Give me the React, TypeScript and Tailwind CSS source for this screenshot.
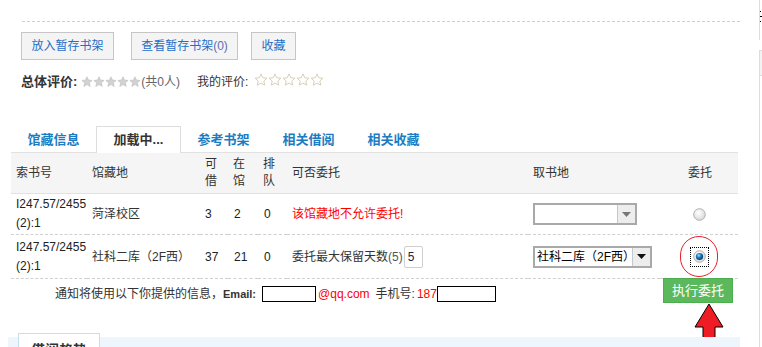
import React from "react";

const font = { fontFamily: '"Liberation Sans", "Noto Sans CJK SC", sans-serif' };

function Star({ filled }: { filled: boolean }) {
  return (
    <svg width={filled ? 12 : 14} height={filled ? 12 : 14} viewBox="0 0 24 24">
      <path
        d="M12 1.5l3 6.6 7.2.8-5.4 4.8 1.6 7.1L12 17.2l-6.4 3.6 1.6-7.1-5.4-4.8 7.2-.8z"
        fill={filled ? "#d2d2d2" : "#fff"}
        stroke={filled ? "#bdbdbd" : "#d4ccb0"}
        strokeWidth={filled ? 1.2 : 1.6}
        strokeLinejoin="round"
      />
    </svg>
  );
}

function Radio({ checked }: { checked?: boolean }) {
  return (
    <svg width="13" height="13" viewBox="0 0 13 13">
      <defs>
        <radialGradient id="rg1" cx="40%" cy="35%" r="70%">
          <stop offset="0" stopColor="#ffffff" />
          <stop offset="1" stopColor="#d6d6d6" />
        </radialGradient>
        <radialGradient id="rg2" cx="40%" cy="35%" r="60%">
          <stop offset="0" stopColor="#9fdcff" />
          <stop offset="0.5" stopColor="#1d7fc4" />
          <stop offset="1" stopColor="#0a3f6e" />
        </radialGradient>
      </defs>
      <circle cx="6.5" cy="6.5" r="5.8" fill="url(#rg1)" stroke="#a8a8a8" strokeWidth="0.9" />
      {checked && <circle cx="6.5" cy="6.5" r="3.6" fill="url(#rg2)" />}
    </svg>
  );
}

function Select({ value, width, dark }: { value?: string; width: number; dark?: boolean }) {
  return (
    <div
      className="flex h-[22px] border-2 border-[#a9a9a9] bg-white"
      style={{ width }}
    >
      <div className="flex-1 min-w-0 flex items-center pl-[2px] text-[12px] leading-none text-black whitespace-nowrap">
        {value}
      </div>
      <div className="w-[18px] shrink-0 flex items-center justify-center border-l border-[#c8c8c8] bg-[#ededed]">
        <svg width="9" height="5" viewBox="0 0 9 5">
          <path d="M0 0h9L4.5 5z" fill={dark ? "#111" : "#777"} />
        </svg>
      </div>
    </div>
  );
}

const tabs = ["馆藏信息", "加载中...", "参考书架", "相关借阅", "相关收藏"];

export default function App() {
  return (
    <div className="flex w-[762px] h-[347px] overflow-hidden bg-white text-[12px] text-[#333]" style={font}>
      <div className="w-[759px] flex flex-col relative">
        {/* dashed rule */}
        <div className="mt-[21px] ml-[22px] w-[718px] border-t border-dashed border-[#cfcfcf]" />

        {/* buttons */}
        <div className="flex mt-[10px] ml-[21px] h-[28px]">
          <button className="h-[28px] w-[93px] border border-[#c6c6c6] bg-[#f4f4f4] text-[#1f6fc6]">放入暂存书架</button>
          <button className="ml-[17px] h-[28px] w-[107px] border border-[#c6c6c6] bg-[#f4f4f4] text-[#1f6fc6]">
            查看暂存书架<span className="text-[#5a6fb0]">(0)</span>
          </button>
          <button className="ml-[13px] h-[28px] w-[45px] border border-[#c6c6c6] bg-[#f4f4f4] text-[#1f6fc6]">收藏</button>
        </div>

        {/* rating */}
        <div className="flex items-center mt-[14px] ml-[21px] h-[16px]">
          <span className="font-bold text-[#333] text-[13px]">总体评价:</span>
          <span className="flex ml-[4px]">
            {[0, 1, 2, 3, 4].map((i) => (
              <Star key={i} filled />
            ))}
          </span>
          <span className="text-[#666]">(共0人)</span>
          <span className="ml-[17px] text-[#333]">我的评价:</span>
          <span className="flex ml-[6px] -mt-[5px]">
            {[0, 1, 2, 3, 4].map((i) => (
              <Star key={i} filled={false} />
            ))}
          </span>
        </div>

        {/* tabs */}
        <div className="flex mt-[36px] ml-[11px] h-[26px]">
          {tabs.map((t, i) => (
            <div
              key={t}
              className={
                "w-[85px] h-[27px] flex items-center justify-center text-[13px] font-bold " +
                (i === 1
                  ? "border border-b-0 border-[#dddddd] bg-white text-[#333] relative z-10"
                  : "text-[#1b7cc2]")
              }
            >
              {t}
            </div>
          ))}
        </div>

        {/* table */}
        <table className="ml-[11px] w-[727px] border-collapse table-fixed text-[12px]">
          <colgroup>
            <col className="w-[76px]" />
            <col className="w-[113px]" />
            <col className="w-[28px]" />
            <col className="w-[30px]" />
            <col className="w-[29px]" />
            <col className="w-[241px]" />
            <col className="w-[132px]" />
            <col className="w-[78px]" />
          </colgroup>
          <thead>
            <tr className="h-[41px] bg-[#f5f5f5] border-t border-b border-[#e2e2e2] text-[#333] leading-[17px]">
              <th className="font-normal text-left pl-[5px]">索书号</th>
              <th className="font-normal text-left pl-[5px]">馆藏地</th>
              <th className="font-normal text-left pl-[5px]">可<br />借</th>
              <th className="font-normal text-left pl-[5px]">在<br />馆</th>
              <th className="font-normal text-left pl-[5px]">排<br />队</th>
              <th className="font-normal text-left pl-[5px]">可否委托</th>
              <th className="font-normal text-left pl-[5px]">取书地</th>
              <th className="font-normal text-center pl-[2px]">委托</th>
            </tr>
          </thead>
          <tbody>
            <tr className="h-[41px] border-b border-dashed border-[#d0d0d0]">
              <td className="pl-[5px] text-[#222] leading-[19px]">I247.57/2455<br />(2):1</td>
              <td className="pl-[5px]">菏泽校区</td>
              <td className="pl-[5px] text-[#222]">3</td>
              <td className="pl-[6px] text-[#222]">2</td>
              <td className="pl-[6px] text-[#222]">0</td>
              <td className="pl-[5px] text-[#f00]">该馆藏地不允许委托!</td>
              <td className="pl-[5px]">
                <Select width={104} />
              </td>
              <td className="text-center">
                <div className="flex justify-center pl-[1px]">
                  <Radio />
                </div>
              </td>
            </tr>
            <tr className="h-[44px] border-b border-dashed border-[#d0d0d0]">
              <td className="pl-[5px] text-[#222] leading-[19px]">I247.57/2455<br />(2):1</td>
              <td className="pl-[5px] whitespace-nowrap">社科二库（2F西）</td>
              <td className="pl-[5px] text-[#222]">37</td>
              <td className="pl-[6px] text-[#222]">21</td>
              <td className="pl-[6px] text-[#222]">0</td>
              <td className="pl-[5px]">
                <div className="flex items-center">
                  委托最大保留天数<span className="text-[#555]">(5)</span>
                  <div className="ml-[1px] w-[19px] h-[22px] border border-[#cfcfcf] rounded-[2px] flex items-center pl-[3px] text-[#224]">5</div>
                </div>
              </td>
              <td className="pl-[5px]">
                <Select width={119} value="社科二库（2F西）" dark />
              </td>
              <td className="text-center">
                <div className="flex justify-center pl-[1px] relative">
                  <div className="w-[19px] h-[20px] border border-dotted border-black flex items-center justify-center">
                    <Radio checked />
                  </div>
                  <div className="absolute left-[20px] -top-[11px] w-[38px] h-[41px] rounded-full border border-[#e8202a]" />
                </div>
              </td>
            </tr>
          </tbody>
        </table>

        {/* notify line */}
        <div className="flex items-center mt-[6px] ml-[55px] h-[25px] whitespace-nowrap">
          <span>通知将使用以下你提供的信息，</span>
          <span className="font-bold text-[#333] text-[11px]">Email:</span>
          <span className="ml-[6px] w-[54px] h-[16px] border border-black bg-white" />
          <span className="text-[#f00] ml-[2px]">@qq.com</span>
          <span className="ml-[6px]">手机号:</span>
          <span className="ml-[2px] text-[#f00]">187</span>
          <span className="w-[59px] h-[16px] border border-black bg-white" />
        </div>
        <div className="flex justify-end -mt-[25px] mr-[26px]">
          <button className="w-[70px] h-[25px] bg-[#5cb85c] border border-[#4cae4c] text-white text-[13px]">
            执行委托
          </button>
        </div>

        {/* red arrow */}
        <svg className="absolute left-[694px] top-[303px]" width="30" height="44" viewBox="0 0 30 44">
          <path d="M15 1L29 24H21V44H9V24H1Z" fill="#ee1c25" stroke="#000" strokeWidth="1" />
        </svg>

        {/* bottom panel */}
        <div className="mt-[34px] ml-[8px] w-[732px] h-[20px] bg-[#eef5fd] relative">
          <div className="absolute left-[10px] -top-[4px] w-[82px] h-[24px] bg-white border border-[#c7ddf0] flex justify-center pt-[6px] text-[14px] font-bold text-[#333]">
            借阅趋势
          </div>
        </div>
      </div>

      {/* neighbour panel edge */}
      <div className="flex-1 flex flex-col">
        <div className="h-[40px] border-l border-[#dddddd] relative">
          <div className="absolute left-[0px] top-[11px] w-[1px] h-[1px] bg-black" />
          <div className="absolute left-[0px] top-[16px] w-[3px] h-[1px] bg-black" />
          <div className="absolute left-[0px] top-[21px] w-[1px] h-[1px] bg-black" />
        </div>
        <div className="mt-[10px] h-[26px] border-l border-t border-b border-[#dddddd] bg-[#f3f3f3]" />
        <div className="flex-1 border-l border-[#dddddd]" />
      </div>
    </div>
  );
}
